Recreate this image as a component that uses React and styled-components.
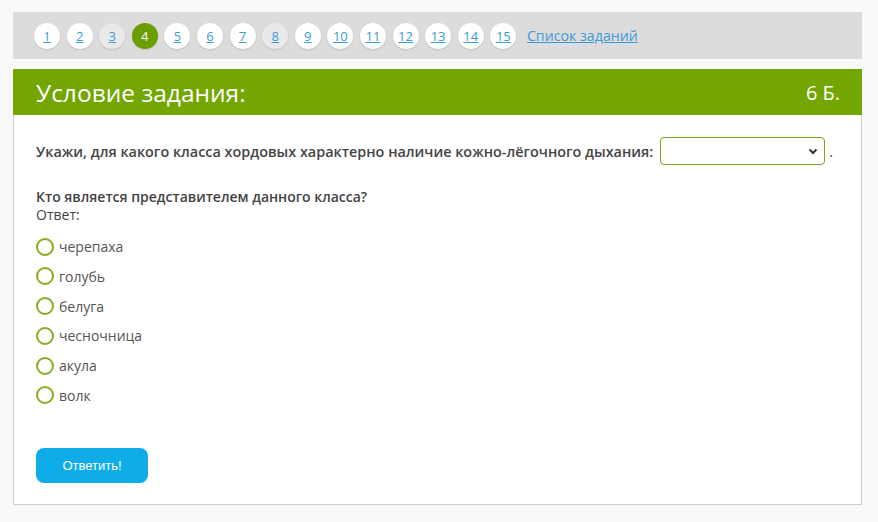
import React from 'react'
import styled, { createGlobalStyle } from 'styled-components'

const Global = createGlobalStyle`
  body {
    margin: 0;
    background: #f9f9f9;
    font-family: "Open Sans", "Liberation Sans", sans-serif;
    color: #444;
  }
`

const Page = styled.div`
  padding: 12px 0 0 13px;
  width: 849px;
`

const Pager = styled.div`
  display: flex;
  align-items: center;
  gap: 6.6px;
  height: 47px;
  padding-left: 21px;
  background: #dcdcdc;
`

const PageDot = styled.a`
  width: 26px;
  height: 26px;
  border-radius: 50%;
  display: flex;
  align-items: center;
  justify-content: center;
  font-size: 13px;
  color: ${p => (p.$active ? '#fff' : '#3b9bd8')};
  text-decoration: ${p => (p.$active ? 'none' : 'underline')};
  background: ${p => (p.$active ? '#6a9e00' : p.$seen ? '#e9e9e9' : '#fff')};
  box-shadow: 0 1px 2px rgba(0, 0, 0, 0.12);
`

const ListLink = styled.a`
  margin-left: 4px;
  font-size: 14.2px;
  color: #3b9bd8;
  text-decoration: underline;
`

const Header = styled.div`
  margin-top: 10px;
  height: 46px;
  background: #73a600;
  color: #fff;
  display: flex;
  align-items: center;
  justify-content: space-between;
  padding: 0 22px 0 23px;
`

const Title = styled.div`
  font-size: 24.5px;
`

const Points = styled.div`
  font-size: 20px;
`

const Body = styled.div`
  border: 1px solid #cfcfcf;
  border-top: none;
  background: #fff;
  padding: 22px 22px 21px 22px;
  height: 346px;
`

const Question = styled.div`
  display: flex;
  align-items: center;
  font-size: 14.4px;
  font-weight: 600;
  color: #444;
`

const Select = styled.div`
  width: 165px;
  height: 28px;
  margin-left: 7px;
  border: 1px solid #7aa514;
  border-radius: 4px;
  background: #fff;
  display: flex;
  align-items: center;
  justify-content: flex-end;
  padding-right: 6px;
  box-sizing: border-box;
`

const Dot = styled.span`
  margin-left: 4px;
  font-weight: 400;
`

const SubQuestion = styled.div`
  margin-top: 23px;
  font-size: 14px;
  font-weight: 600;
  line-height: 18px;
`

const Answer = styled.div`
  font-size: 14px;
  line-height: 18px;
`

const Options = styled.div`
  margin-top: 13px;
  display: flex;
  flex-direction: column;
  gap: 10.8px;
`

const Option = styled.label`
  display: flex;
  align-items: center;
  gap: 5px;
  font-size: 14px;
  color: #555;
  height: 19px;
`

const Radio = styled.span`
  width: 14px;
  height: 14px;
  border: 2px solid #86ad1e;
  border-radius: 50%;
`

const Button = styled.button`
  margin-top: 43px;
  width: 112px;
  height: 35px;
  border: none;
  border-radius: 8px;
  background: #0fade8;
  color: #fff;
  font-family: "Liberation Sans", Arial, sans-serif;
  font-size: 13px;
`

const options = ['черепаха', 'голубь', 'белуга', 'чесночница', 'акула', 'волк']

export default function App() {
  const pages = Array.from({ length: 15 }, (_, i) => i + 1)
  return (
    <Page>
      <Global />
      <Pager>
        {pages.map(n => (
          <PageDot key={n} $active={n === 4} $seen={n === 3 || n === 8}>
            {n}
          </PageDot>
        ))}
        <ListLink>Список заданий</ListLink>
      </Pager>
      <Header>
        <Title>Условие задания:</Title>
        <Points>6 Б.</Points>
      </Header>
      <Body>
        <Question>
          Укажи, для какого класса хордовых характерно наличие кожно-лёгочного дыхания:
          <Select>
            <svg width="10" height="7" viewBox="0 0 10 7">
              <path d="M1.5 1.5 L5 5 L8.5 1.5" fill="none" stroke="#333" strokeWidth="2" />
            </svg>
          </Select>
          <Dot>.</Dot>
        </Question>
        <SubQuestion>Кто является представителем данного класса?</SubQuestion>
        <Answer>Ответ:</Answer>
        <Options>
          {options.map(o => (
            <Option key={o}>
              <Radio />
              {o}
            </Option>
          ))}
        </Options>
        <Button>Ответить!</Button>
      </Body>
    </Page>
  )
}
